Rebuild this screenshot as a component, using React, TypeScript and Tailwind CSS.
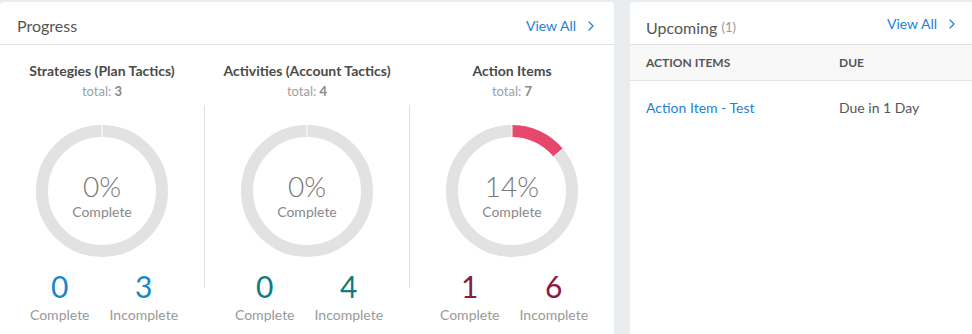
import { ChevronRight } from "lucide-react";

interface StatColumn {
  title: string;
  total: number;
  complete: number;
  color: string;
}

const columns: StatColumn[] = [
  { title: "Strategies (Plan Tactics)", total: 3, complete: 0, color: "text-[#1689c6]" },
  { title: "Activities (Account Tactics)", total: 4, complete: 0, color: "text-[#127a80]" },
  { title: "Action Items", total: 7, complete: 1, color: "text-[#8b1a44]" },
];

function Donut({ percent }: { percent: number }) {
  const r = 60;
  const c = 2 * Math.PI * r;
  const arc = (percent / 100) * c;
  return (
    <div className="relative w-[132px] h-[132px]">
      <svg width="132" height="132" viewBox="0 0 132 132">
        <defs>
          <linearGradient id="pinkArc" x1="0" y1="0" x2="1" y2="1">
            <stop offset="0%" stopColor="#f45b7e" />
            <stop offset="100%" stopColor="#e4436a" />
          </linearGradient>
        </defs>
        <circle cx="66" cy="66" r={r} fill="none" stroke="#e2e2e2" strokeWidth="12" />
        {percent > 0 && (
          <circle
            cx="66"
            cy="66"
            r={r}
            fill="none"
            stroke="url(#pinkArc)"
            strokeWidth="12"
            strokeDasharray={`${arc} ${c}`}
            transform="rotate(-90 66 66)"
          />
        )}
        {/* small white separators */}
        <line x1="66" y1="0" x2="66" y2="12" stroke="#fff" strokeWidth="1" />
        {percent > 0 && (
          <line
            x1="66"
            y1="0"
            x2="66"
            y2="12"
            stroke="#fff"
            strokeWidth="1"
            transform={`rotate(${(percent / 100) * 360} 66 66)`}
          />
        )}
      </svg>
      <div className="absolute inset-0 flex flex-col items-center justify-center pt-[8px]">
        <div className="text-[28px] leading-[30px] font-light text-[#777]">{percent}%</div>
        <div className="text-[14px] leading-[16px] text-[#888] mt-[3px]">Complete</div>
      </div>
    </div>
  );
}

function ViewAll() {
  return (
    <a className="flex items-center gap-[7px] text-[14px] text-[#1f80d6] cursor-pointer">
      View All
      <ChevronRight size={16} strokeWidth={1.8} className="mt-[1px]" />
    </a>
  );
}

export default function App() {
  return (
    <div className="w-[972px] h-[334px] overflow-hidden bg-[#eaedf0] pt-[2px] font-['Lato','Liberation_Sans',sans-serif]">
      <div className="flex gap-4 h-full">
        {/* Progress card */}
        <div className="w-[614px] shrink-0 bg-white rounded-t-[4px]">
          <div className="h-[43px] flex items-start justify-between pl-[17px] pr-[15px] border-b border-[#e2e2e2]">
            <h2 className="text-[16px] leading-[20px] text-[#555] mt-[14px]">Progress</h2>
            <div className="mt-[13px]">
              <ViewAll />
            </div>
          </div>
          <div className="flex pt-[16px]">
            {columns.map((col, i) => {
              const pct = Math.round((col.complete / col.total) * 100);
              return (
                <div key={col.title} className="contents">
                  {i > 0 && <div className="w-px h-[183px] mt-[44px] bg-[#e0e0e0]" />}
                  <div className="flex-1 flex flex-col items-center">
                    <div className="text-[14px] leading-[20px] font-bold text-[#4a4a4a]">{col.title}</div>
                    <div className="text-[13px] leading-[20px] text-[#a0a0a0]">
                      total: <span className="font-bold text-[#888]">{col.total}</span>
                    </div>
                    <div className="mt-[24px]">
                      <Donut percent={pct} />
                    </div>
                    <div className="flex gap-[20px] mt-[12px] ml-[4px]">
                      <div className="flex flex-col items-center">
                        <div className={`text-[30px] leading-[34px] ${col.color}`}>{col.complete}</div>
                        <div className="text-[14px] leading-[16px] text-[#999] mt-[4px]">Complete</div>
                      </div>
                      <div className="flex flex-col items-center">
                        <div className={`text-[30px] leading-[34px] ${col.color}`}>{col.total - col.complete}</div>
                        <div className="text-[14px] leading-[16px] text-[#999] mt-[4px]">Incomplete</div>
                      </div>
                    </div>
                  </div>
                </div>
              );
            })}
          </div>
        </div>

        {/* Upcoming card */}
        <div className="w-[360px] shrink-0 bg-white rounded-t-[4px]">
          <div className="h-[43px] flex items-start justify-between pl-[16px] pr-[30px] border-b border-[#e2e2e2]">
            <h2 className="text-[16px] leading-[20px] text-[#555] mt-[16px]">
              Upcoming <span className="text-[13px] text-[#999] relative top-[-2px]">(1)</span>
            </h2>
            <div className="mt-[11px]">
              <ViewAll />
            </div>
          </div>
          <div className="flex h-[36px] items-center bg-[#f8f8f8] border-b border-[#e2e2e2] text-[12px] font-bold text-[#555]">
            <div className="w-[209px] pl-[16px]">ACTION ITEMS</div>
            <div>DUE</div>
          </div>
          <div className="flex h-[52px] items-center text-[14px]">
            <div className="w-[209px] pl-[16px] text-[#1f80d6]">Action Item - Test</div>
            <div className="text-[#555]">Due in 1 Day</div>
          </div>
        </div>
      </div>
    </div>
  );
}
